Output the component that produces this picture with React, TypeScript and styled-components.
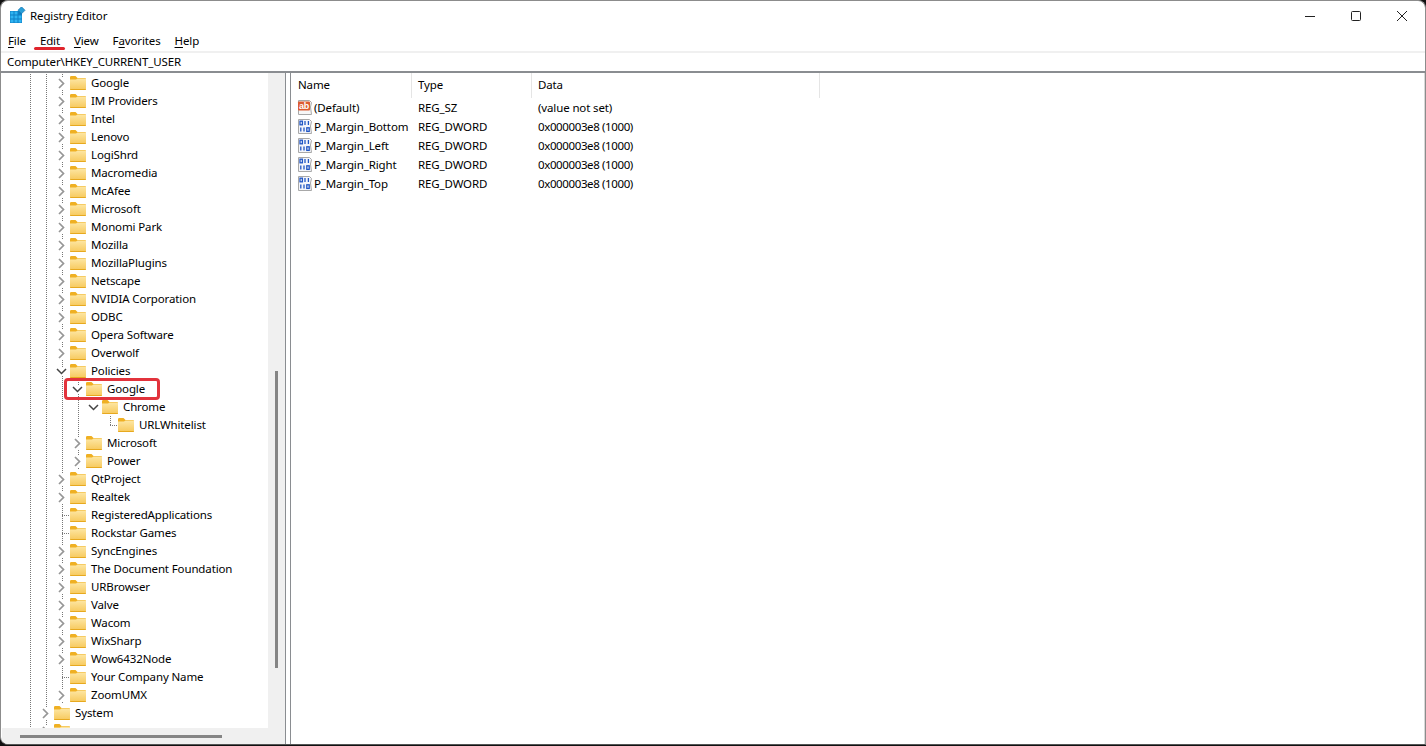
import React from 'react';
import styled, { createGlobalStyle } from 'styled-components';

const GlobalStyle = createGlobalStyle`
  html, body {
    margin: 0;
    height: 100%;
    background: #111;
    overflow: hidden;
  }
  #root {
    height: 100%;
  }
`;

const Window = styled.div`
  position: relative;
  box-sizing: border-box;
  width: 1426px;
  height: 745px;
  display: flex;
  flex-direction: column;
  background: #fff;
  border: 1px solid #8c8c8c;
  border-bottom-color: #555;
  border-radius: 8px 8px 0 8px;
  overflow: hidden;
  font-family: 'Noto Sans', 'Open Sans', sans-serif;
  font-size: 11.5px;
  letter-spacing: -0.13px;
  color: #000;
`;

const TitleBar = styled.div`
  height: 29px;
  flex: none;
  display: flex;
  align-items: center;
  padding: 0 0 0 8px;
`;

const AppName = styled.span`
  margin-left: 4px;
  flex: 1;
`;

const WindowButton = styled.button`
  width: 46px;
  height: 29px;
  padding: 0;
  border: 0;
  background: none;
  display: flex;
  align-items: center;
  justify-content: center;
`;

const MenuBar = styled.div`
  height: 20px;
  flex: none;
  display: flex;
  align-items: center;
  padding-left: 7px;
  gap: 14px;
`;

const MenuItem = styled.span`
  u {
    text-underline-offset: 2px;
  }
`;

const EditMark = styled.div`
  position: absolute;
  left: 33px;
  top: 46px;
  width: 31px;
  height: 3px;
  border-radius: 2px;
  background: #e0242c;
`;

const AddressBar = styled.div`
  flex: none;
  margin-top: 1px;
  box-sizing: border-box;
  height: 22px;
  display: flex;
  align-items: center;
  padding: 0 0 1px 6px;
  border-top: 2px solid #f0f0f0;
  border-bottom: 2px solid #8a8d91;
`;

const Panes = styled.div`
  flex: 1;
  min-height: 0;
  display: flex;
`;

const TreePane = styled.div`
  width: 284px;
  flex: none;
  box-sizing: border-box;
  display: grid;
  grid-template-columns: 1fr 17px;
  grid-template-rows: 1fr 16px;
  border-right: 1px solid #8a8d91;
  margin-left: 1px;
  background: #f0f0f0;
`;

const TreeView = styled.div`
  background: #fff;
  overflow: hidden;
  padding-top: 1px;
  min-height: 0;
`;

const Row = styled.div`
  height: 18px;
  display: flex;
  align-items: stretch;
  padding-left: 4px;
`;

const Guide = styled.div<{ $line?: boolean }>`
  width: 16px;
  flex: none;
  background: ${(p) =>
    p.$line
      ? 'repeating-linear-gradient(to bottom, #777 0 1px, transparent 1px 2px) 8px 0 / 1px 100% no-repeat'
      : 'none'};
`;

const Branch = styled(Guide)`
  position: relative;
  display: flex;
  align-items: center;
  justify-content: center;
`;

const Elbow = styled.div`
  position: absolute;
  left: 8px;
  top: 9px;
  width: 8px;
  height: 1px;
  background: repeating-linear-gradient(to right, #777 0 1px, transparent 1px 2px);
`;

const ElbowUp = styled.div`
  position: absolute;
  left: 8px;
  top: 0;
  width: 1px;
  height: 9px;
  background: repeating-linear-gradient(to bottom, #777 0 1px, transparent 1px 2px);
`;

const Toggle = styled.svg`
  background: #fff;
  display: block;
  margin-right: 1px;
`;

const Label = styled.span`
  margin-left: 5px;
  line-height: 17px;
  white-space: nowrap;
`;

const Highlight = styled.div`
  position: absolute;
  left: 63px;
  top: 377px;
  width: 90px;
  height: 16px;
  border: 3px solid #e2333c;
  border-radius: 4px;
`;

const VTrack = styled.div`
  position: relative;
  grid-row: 1;
  grid-column: 2;
`;

const VThumb = styled.div`
  position: absolute;
  left: 7px;
  top: 298px;
  width: 3px;
  height: 297px;
  background: #858585;
`;

const HTrack = styled.div`
  grid-row: 2;
  grid-column: 1 / 3;
  display: flex;
  align-items: center;
  padding-left: 18px;
`;

const HThumb = styled.div`
  width: 202px;
  height: 3px;
  background: #858585;
`;

const Gap = styled.div`
  width: 4px;
  flex: none;
`;

const ListPane = styled.div`
  flex: 1;
  padding-left: 1px;
  border-left: 1px solid #8a8d91;
  border-right: 1px solid #d8d8d8;
`;

const Header = styled.div`
  height: 25px;
  display: flex;
`;

const HeadCell = styled.div<{ $w: number }>`
  box-sizing: border-box;
  width: ${(p) => p.$w}px;
  padding-left: 6px;
  line-height: 24px;
  border-right: 1px solid #e5e5e5;
`;

const ListRow = styled.div`
  height: 19px;
  display: flex;
  align-items: center;
`;

const NameCell = styled.div`
  box-sizing: border-box;
  width: 120px;
  padding-left: 5px;
  display: flex;
  align-items: center;
  gap: 1px;
  white-space: nowrap;
  line-height: 17px;
`;

const Cell = styled.div<{ $w: number; $hex?: boolean }>`
  box-sizing: border-box;
  width: ${(p) => p.$w}px;
  padding: 0 0 1px 6px;
  letter-spacing: ${(p) => (p.$hex ? '-0.38px' : 'inherit')};
`;

const AppIcon = () => (
  <svg width="17" height="17" viewBox="0 0 17 17">
    <rect x="1" y="4" width="12" height="12" fill="#0f7fc4" />
    <g fill="#2fb4f2">
      <rect x="1.5" y="4.5" width="3" height="3" />
      <rect x="5.5" y="4.5" width="3" height="3" />
      <rect x="9.5" y="8.5" width="3" height="3" />
      <rect x="1.5" y="8.5" width="3" height="3" />
      <rect x="5.5" y="8.5" width="3" height="3" />
      <rect x="1.5" y="12.5" width="3" height="3" />
      <rect x="5.5" y="12.5" width="3" height="3" />
      <rect x="9.5" y="12.5" width="3" height="3" />
    </g>
    <rect x="10" y="0.8" width="5" height="5" transform="rotate(45 12.5 3.3)" fill="#2a9fd8" stroke="#0f6ca8" strokeWidth="0.6" />
  </svg>
);

const Folder = () => (
  <svg width="16" height="14" viewBox="0 0 16 14" style={{ alignSelf: 'center', flex: 'none' }}>
    <defs>
      <linearGradient id="folderBody" x1="0" y1="0" x2="0" y2="1">
        <stop offset="0" stopColor="#fde6a3" />
        <stop offset="1" stopColor="#f7c95c" />
      </linearGradient>
    </defs>
    <path d="M0 1.2 Q0 0 1.2 0 H5.5 L7.5 2 H15 Q16 2 16 3 V4 H0 Z" fill="#efb023" />
    <path d="M0 3.5 H6 L7.5 2.6 H16 V13 Q16 14 15 14 H1 Q0 14 0 13 Z" fill="url(#folderBody)" />
    <path d="M0 13 H16 V13.2 Q16 14 15 14 H1 Q0 14 0 13.2 Z" fill="#e7a91f" />
  </svg>
);

const Closed = () => (
  <Toggle width="9" height="11" viewBox="0 0 9 11">
    <path d="M2 1 L6.5 5.5 L2 10" fill="none" stroke="#969696" strokeWidth="1.7" />
  </Toggle>
);

const Open = () => (
  <Toggle width="11" height="9" viewBox="0 0 11 9">
    <path d="M1 2 L5.5 6.5 L10 2" fill="none" stroke="#444" strokeWidth="1.5" />
  </Toggle>
);

const StringIcon = () => (
  <svg width="16" height="17" viewBox="0 0 16 17" style={{ flex: 'none' }}>
    <path d="M1.5 1.5 H12.5 L14.5 3.5 L13.5 8 L14.5 15.5 H1.5 Z" fill="#f7f7f7" stroke="#a8a8a8" />
    <rect x="1" y="2.5" width="12" height="9" rx="1" fill="#dc5a30" />
    <text x="7" y="10" textAnchor="middle" fontSize="9" fontWeight="700" fill="#fff" fontFamily="Liberation Sans, sans-serif">ab</text>
  </svg>
);

const DwordIcon = () => (
  <svg width="16" height="17" viewBox="0 0 16 17" style={{ flex: 'none' }}>
    <path d="M1.5 1.5 H12.5 L14.5 3.5 L13.5 8 L14.5 15.5 H1.5 Z" fill="#f3f5fb" stroke="#a8a8a8" />
    <g fill="none" stroke="#1f55c4" strokeWidth="1.3">
      <rect x="3" y="3.2" width="2.4" height="3.6" />
      <path d="M8 3 V7" />
      <path d="M11.4 3 V7" />
      <path d="M3.8 9.5 V13.6" />
      <path d="M7 9.5 V13.6" />
      <rect x="9.8" y="9.8" width="2.4" height="3.6" />
    </g>
  </svg>
);

type TreeItem = {
  name: string;
  depth: number;
  kind: 'closed' | 'open' | 'leaf' | 'last';
  lines?: number[];
};

const L3 = [1, 2];
const L4 = [1, 2, 3];

const names3 = (list: string[]): TreeItem[] =>
  list.map((name) => ({ name, depth: 3, kind: 'closed', lines: L3 }));

const treeItems: TreeItem[] = [
  ...names3([
    'Google', 'IM Providers', 'Intel', 'Lenovo', 'LogiShrd', 'Macromedia', 'McAfee', 'Microsoft',
    'Monomi Park', 'Mozilla', 'MozillaPlugins', 'Netscape', 'NVIDIA Corporation', 'ODBC',
    'Opera Software', 'Overwolf',
  ]),
  { name: 'Policies', depth: 3, kind: 'open', lines: L3 },
  { name: 'Google', depth: 4, kind: 'open', lines: L4 },
  { name: 'Chrome', depth: 5, kind: 'open', lines: [1, 2, 3, 4] },
  { name: 'URLWhitelist', depth: 6, kind: 'last', lines: [1, 2, 3, 4] },
  { name: 'Microsoft', depth: 4, kind: 'closed', lines: L4 },
  { name: 'Power', depth: 4, kind: 'closed', lines: L4 },
  ...names3(['QtProject', 'Realtek']),
  { name: 'RegisteredApplications', depth: 3, kind: 'leaf', lines: L3 },
  { name: 'Rockstar Games', depth: 3, kind: 'leaf', lines: L3 },
  ...names3([
    'SyncEngines', 'The Document Foundation', 'URBrowser', 'Valve', 'Wacom', 'WixSharp', 'Wow6432Node',
  ]),
  { name: 'Your Company Name', depth: 3, kind: 'leaf', lines: L3 },
  { name: 'ZoomUMX', depth: 3, kind: 'closed', lines: L3 },
  { name: 'System', depth: 2, kind: 'closed', lines: [1] },
  { name: '', depth: 2, kind: 'closed', lines: [1] },
];

const values = [
  { name: '(Default)', type: 'REG_SZ', data: '(value not set)', text: true },
  { name: 'P_Margin_Bottom', type: 'REG_DWORD', data: '0x000003e8 (1000)' },
  { name: 'P_Margin_Left', type: 'REG_DWORD', data: '0x000003e8 (1000)' },
  { name: 'P_Margin_Right', type: 'REG_DWORD', data: '0x000003e8 (1000)' },
  { name: 'P_Margin_Top', type: 'REG_DWORD', data: '0x000003e8 (1000)' },
];

function TreeRow({ item }: { item: TreeItem }) {
  const cells = Array.from({ length: item.depth }, (_, i) => i);
  return (
    <Row>
      {cells.map((i) => (
        <Guide key={i} $line={item.lines?.includes(i)} />
      ))}
      {item.kind === 'last' ? (
        <Branch>
          <ElbowUp />
          <Elbow />
        </Branch>
      ) : (
        <Branch $line={item.depth !== 5 && item.depth !== 6}>
          {item.kind === 'leaf' && <Elbow />}
          {item.kind === 'closed' && <Closed />}
          {item.kind === 'open' && <Open />}
        </Branch>
      )}
      <Folder />
      <Label>{item.name}</Label>
    </Row>
  );
}

export default function App() {
  return (
    <>
      <GlobalStyle />
      <Window>
        <TitleBar>
          <AppIcon />
          <AppName>Registry Editor</AppName>
          <WindowButton>
            <svg width="12" height="12" viewBox="0 0 12 12">
              <path d="M1 6.5 H11" stroke="#222" />
            </svg>
          </WindowButton>
          <WindowButton>
            <svg width="12" height="12" viewBox="0 0 12 12">
              <rect x="1.5" y="1.5" width="9" height="9" rx="1" fill="none" stroke="#222" />
            </svg>
          </WindowButton>
          <WindowButton>
            <svg width="12" height="12" viewBox="0 0 12 12">
              <path d="M1 1 L11 11 M11 1 L1 11" stroke="#222" />
            </svg>
          </WindowButton>
        </TitleBar>
        <MenuBar>
          <MenuItem><u>F</u>ile</MenuItem>
          <MenuItem><u>E</u>dit</MenuItem>
          <MenuItem><u>V</u>iew</MenuItem>
          <MenuItem>F<u>a</u>vorites</MenuItem>
          <MenuItem><u>H</u>elp</MenuItem>
        </MenuBar>
        <EditMark />
        <AddressBar>Computer\HKEY_CURRENT_USER</AddressBar>
        <Panes>
          <TreePane>
            <TreeView>
              {treeItems.map((item, i) => (
                <TreeRow key={i} item={item} />
              ))}
            </TreeView>
            <VTrack>
              <VThumb />
            </VTrack>
            <HTrack>
              <HThumb />
            </HTrack>
          </TreePane>
          <Gap />
          <ListPane>
            <Header>
              <HeadCell $w={120}>Name</HeadCell>
              <HeadCell $w={120}>Type</HeadCell>
              <HeadCell $w={288}>Data</HeadCell>
            </Header>
            {values.map((v) => (
              <ListRow key={v.name}>
                <NameCell>
                  {v.text ? <StringIcon /> : <DwordIcon />}
                  {v.name}
                </NameCell>
                <Cell $w={120}>{v.type}</Cell>
                <Cell $w={288} $hex={!v.text}>{v.data}</Cell>
              </ListRow>
            ))}
          </ListPane>
        </Panes>
        <Highlight />
      </Window>
    </>
  );
}
